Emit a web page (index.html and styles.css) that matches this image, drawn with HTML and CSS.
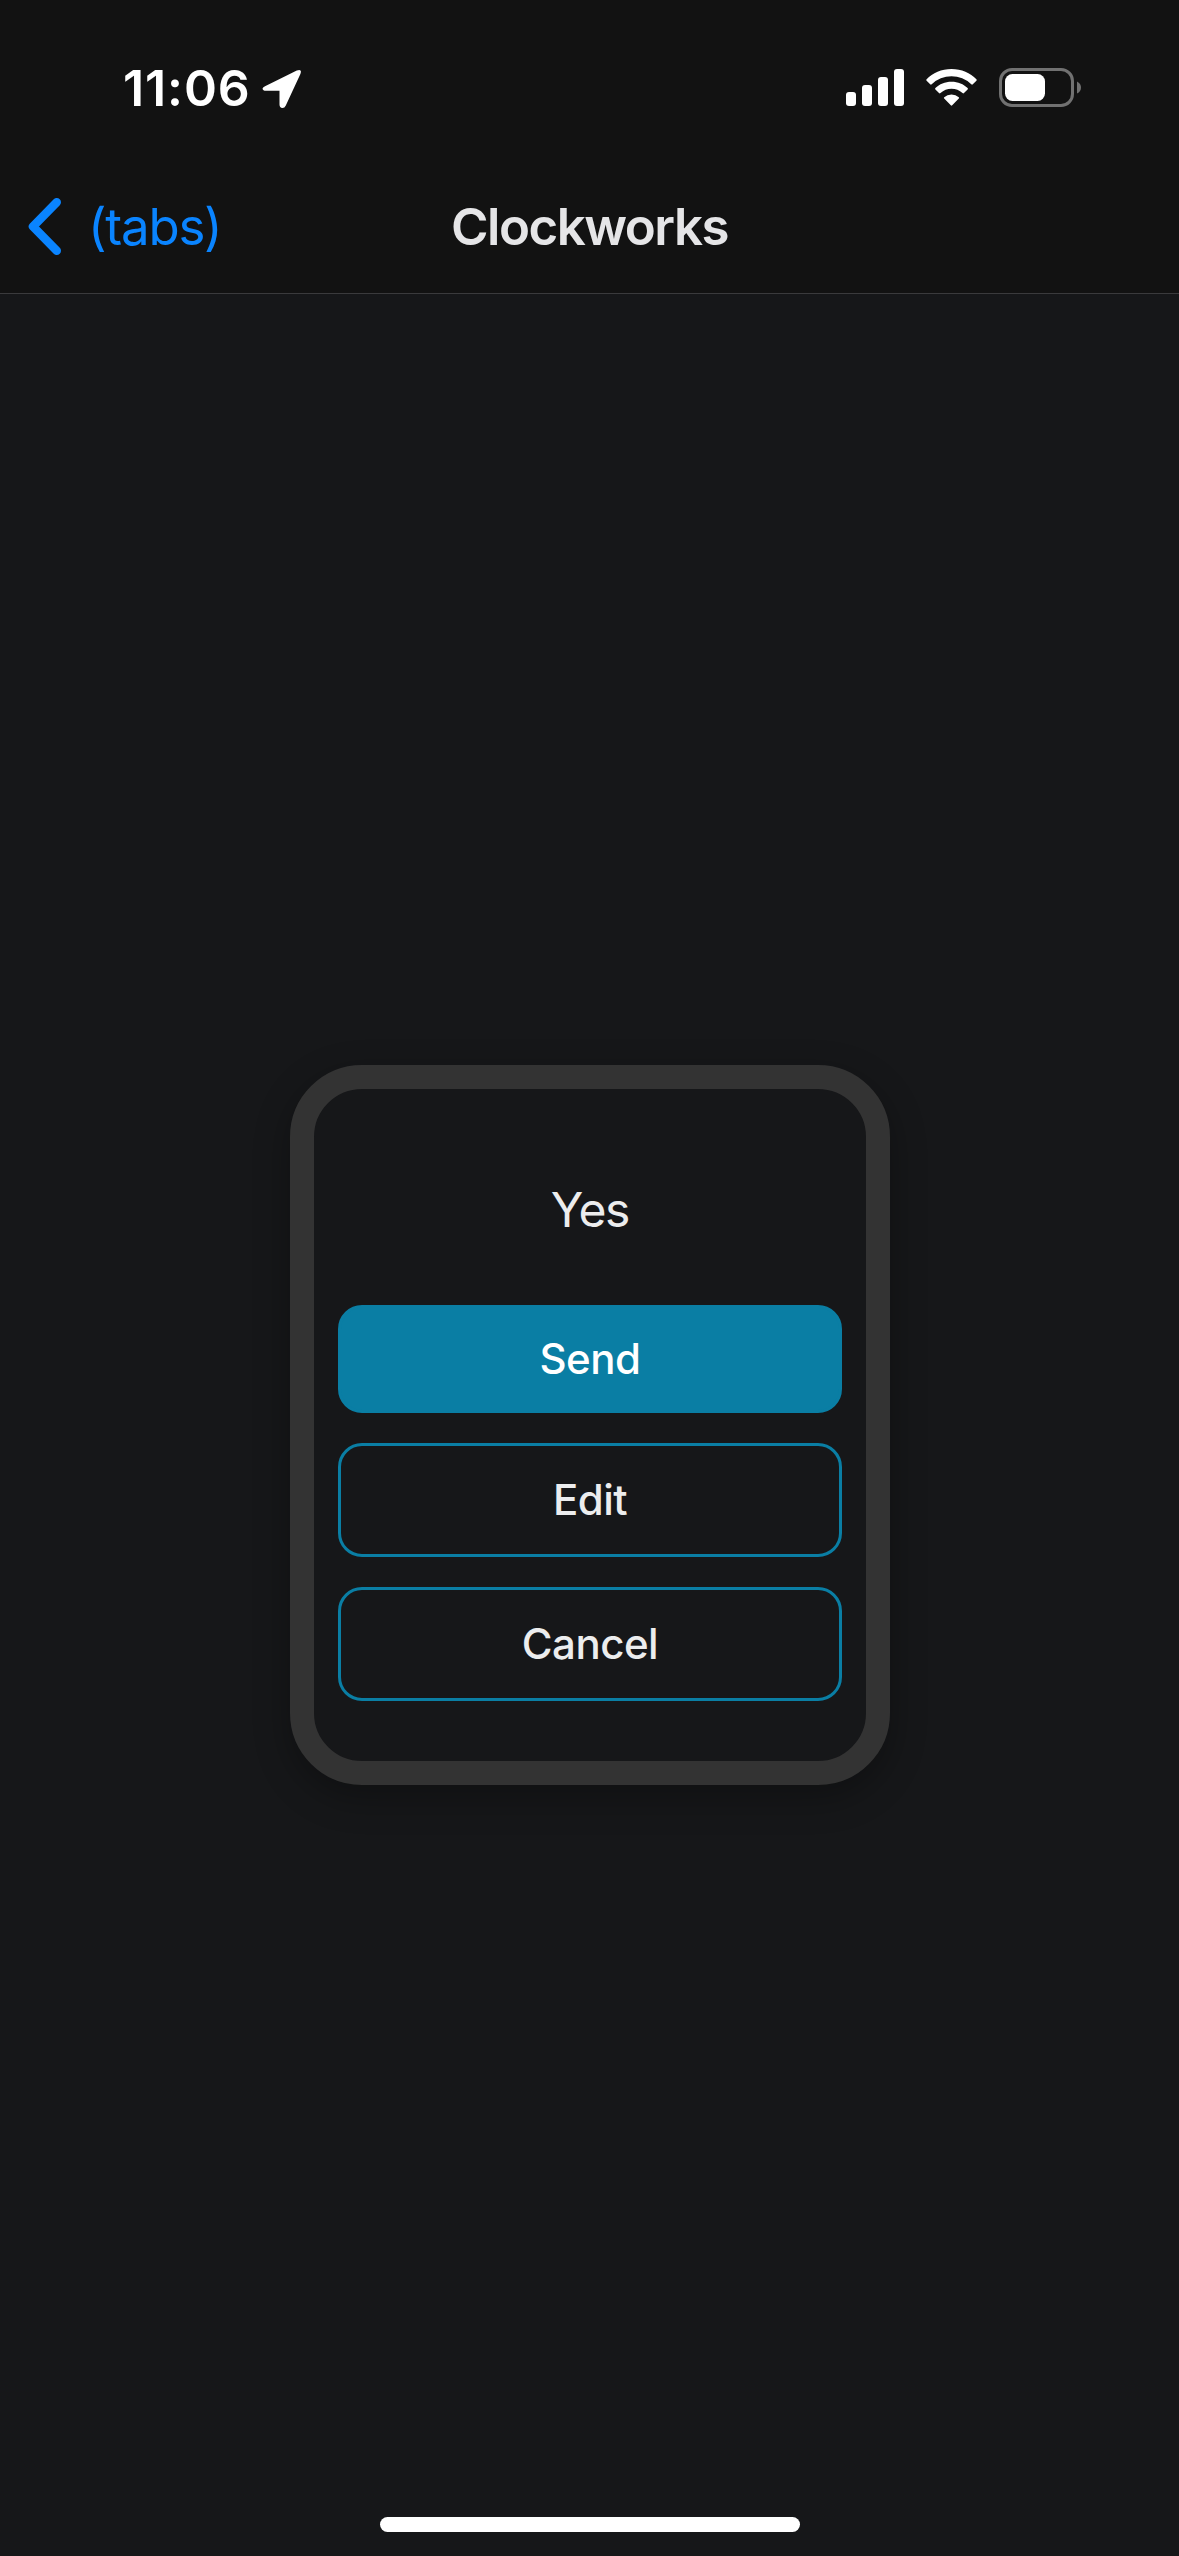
FILE: index.html
```html
<!DOCTYPE html>
<html lang="en">
<head>
<meta charset="utf-8">
<title>Clockworks</title>
<link rel="stylesheet" href="styles.css">
</head>
<body>
<div class="screen">
  <header class="header">
    <div class="status">
      <div class="status-left">
        <span class="time">11:06</span>
        <svg class="location" width="40" height="40" viewBox="0 0 40 40"><path d="M3 17.200 34.800 1.500Q40.400-.5 38.400 5L23.800 36.500Q22.600 39.200 20.300 39.100 17.600 38.800 17.500 35.500V21.800H4Q.8 21.600.5 19.700.5 18.300 3 17.200Z" fill="#fff"/></svg>
      </div>
      <div class="status-right">
        <svg class="signal" width="58" height="37" viewBox="0 0 58 37" fill="#fff"><rect y="23" width="10" height="14" rx="3"/><rect x="16" y="16" width="10" height="21" rx="3"/><rect x="32" y="8" width="10" height="29" rx="3"/><rect x="48" width="10" height="37" rx="3"/></svg>
        <svg class="wifi" width="51" height="37" viewBox="0 0 51 37" fill="#fff"><path d="M25.500 0C35.500 0 44.300 3.900 50.400 10.200Q51.100 11 50.400 11.700L46.800 15.300Q46.100 16 45.300 15.300A28.500 28.500 0 0 0 5.700 15.300Q4.900 16 4.200 15.300L.6 11.700Q-.1 11 .6 10.200C6.700 3.900 15.500 0 25.500 0Z"/><path d="M25.500 12.800C32 12.800 37.600 15.200 41.600 19.100Q42.300 19.800 41.600 20.500L38 24.100Q37.300 24.800 36.500 24.100A16.300 16.300 0 0 0 14.500 24.100Q13.700 24.800 13 24.100L9.400 20.500Q8.700 19.800 9.400 19.100C13.400 15.200 19 12.800 25.500 12.800Z"/><path d="M25.500 25.500Q29.800 25.500 32.800 28.200 33.500 28.900 32.800 29.600L26.200 36.300Q25.500 37 24.800 36.300L18.200 29.600Q17.500 28.900 18.200 28.200 21.200 25.500 25.500 25.500Z"/></svg>
        <svg class="battery" width="82" height="39" viewBox="0 0 82 39"><rect x="1.500" y="1.500" width="72" height="36" rx="11.500" fill="none" stroke="#717171" stroke-width="3"/><path d="M78 13.500Q82 15.500 82 19.500T78 25.500Z" fill="#717171"/><rect x="6" y="6" width="40" height="27" rx="7.500" fill="#fff"/></svg>
      </div>
    </div>
    <nav class="nav">
      <a class="back">
        <svg class="chevron" width="34" height="58" viewBox="0 0 34 58"><path d="M29.750 4.250 6 28.500 29.750 52.750" fill="none" stroke="#0a84ff" stroke-width="8.500" stroke-linecap="round" stroke-linejoin="round"/></svg>
        <span class="back-label">(tabs)</span>
      </a>
      <h1 class="title">Clockworks</h1>
    </nav>
  </header>
  <main class="content">
    <section class="card">
      <p class="message">Yes</p>
      <div class="actions">
        <button class="button primary">Send</button>
        <button class="button outline">Edit</button>
        <button class="button outline">Cancel</button>
      </div>
    </section>
  </main>
  <div class="home-indicator"></div>
</div>
</body>
</html>
```
FILE: styles.css
```css
* { box-sizing: border-box; }
body { margin: 0; background: #161719; font-family: Inter, "Liberation Sans", sans-serif; }
.screen { position: relative; display: flex; flex-direction: column; width: 1179px; height: 2556px; overflow: hidden; }
.header { height: 294px; background: #121212; border-bottom: 1px solid #3a3a3c; }
.status { display: flex; justify-content: space-between; height: 177px; padding: 68px 98px 0 123px; }
.status-left, .status-right { display: flex; align-items: flex-start; }
.time { color: #fff; font-size: 50px; font-weight: 600; line-height: 40px; letter-spacing: 0.9px; }
.location { margin-left: 11px; margin-top: 1px; }
.signal { margin-top: 1px; }
.wifi { margin: 1px 22px 0 22px; }
.nav { display: grid; grid-template-columns: 1fr auto 1fr; align-items: center; height: 100px; }
.back { display: flex; align-items: center; padding-left: 27px; }
.back-label { margin-left: 27px; color: #0a84ff; font-size: 51px; line-height: 60px; letter-spacing: -1.25px; }
.title { margin: 0; color: #e5e5e7; font-size: 51px; font-weight: 600; line-height: 60px; letter-spacing: -1.5px; }
.content { flex: 1; display: flex; align-items: center; justify-content: center; padding-left: 1px; }
.card { width: 600px; height: 720px; padding: 0 24px; border: 24px solid #333; border-radius: 72px; background: #161719; box-shadow: 0 12px 36px rgba(0, 0, 0, 0.3); }
.message { margin: 0; padding-top: 85px; height: 216px; color: #ecedee; font-size: 48px; line-height: 72px; letter-spacing: -1.3px; text-align: center; }
.actions { display: flex; flex-direction: column; gap: 30px; }
.button { height: 114px; padding: 0; border: 3px solid #0a7ea4; border-radius: 24px; background: transparent; color: #ecedee; font: 500 42px/48px Inter, "Liberation Sans", sans-serif; letter-spacing: -0.5px; }
.primary { height: 108px; background: #0a7ea4; color: #fff; }
.home-indicator { position: absolute; left: 380px; bottom: 24px; width: 420px; height: 15px; border-radius: 8px; background: #fff; }
```
